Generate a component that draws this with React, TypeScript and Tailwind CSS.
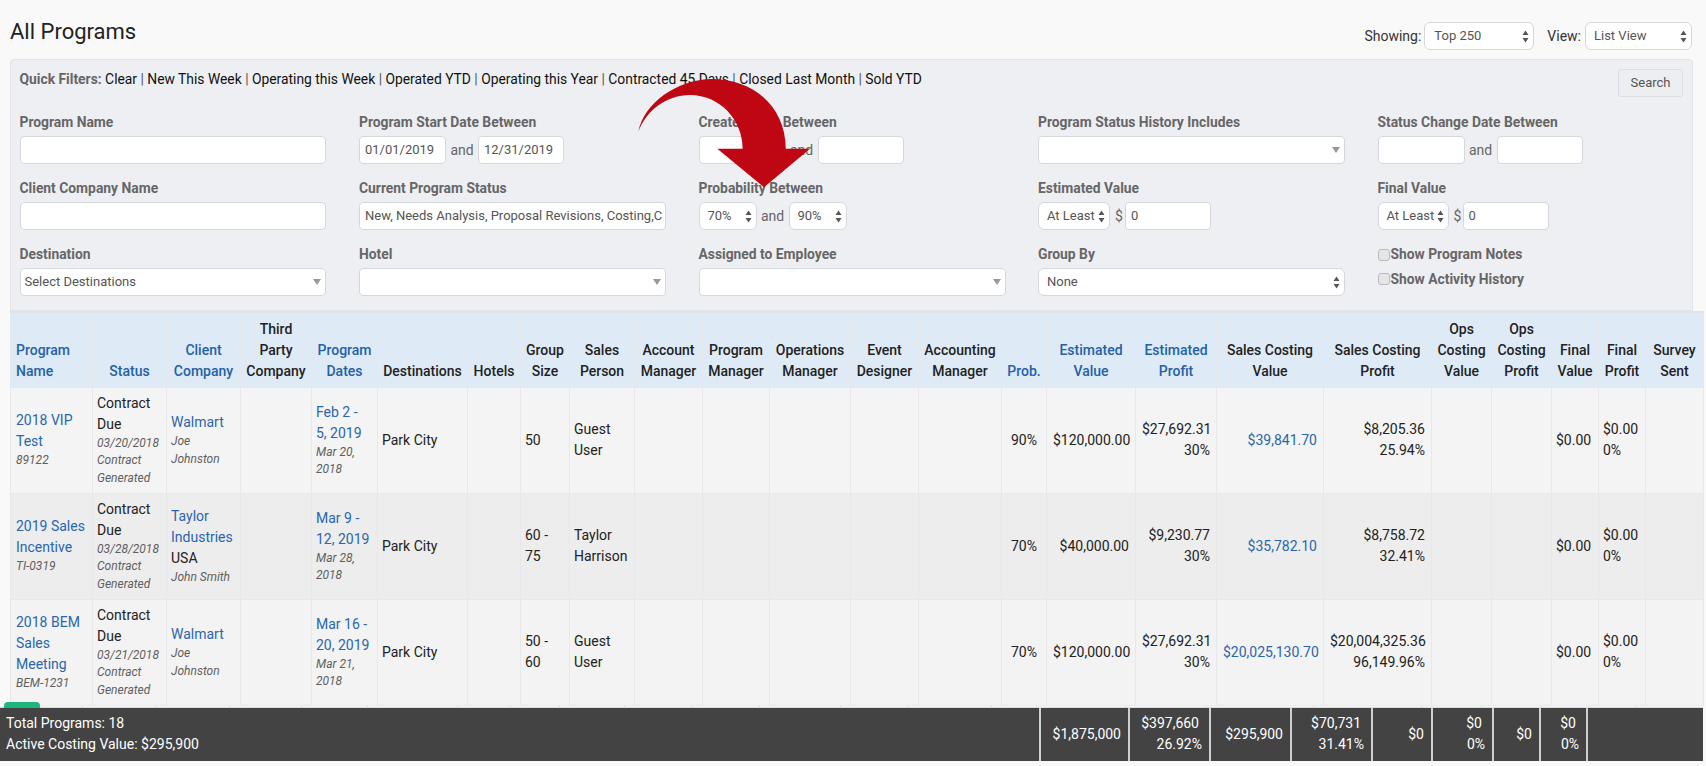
import type { ReactNode } from 'react';

const colWidths = [
  'w-[82px]', 'w-[74px]', 'w-[74px]', 'w-[71px]', 'w-[66px]', 'w-[90px]', 'w-[53px]', 'w-[49px]',
  'w-[65px]', 'w-[68px]', 'w-[67px]', 'w-[81px]', 'w-[68px]', 'w-[83px]', 'w-[45px]', 'w-[89px]',
  'w-[81px]', 'w-[107px]', 'w-[108px]', 'w-[60px]', 'w-[60px]', 'w-[47px]', 'w-[47px]', 'w-[58px]',
];

const headers = [
  { lines: ['Program', 'Name'], link: true },
  { lines: ['Status'], link: true },
  { lines: ['Client', 'Company'], link: true },
  { lines: ['Third', 'Party', 'Company'] },
  { lines: ['Program', 'Dates'], link: true },
  { lines: ['Destinations'] },
  { lines: ['Hotels'] },
  { lines: ['Group', 'Size'] },
  { lines: ['Sales', 'Person'] },
  { lines: ['Account', 'Manager'] },
  { lines: ['Program', 'Manager'] },
  { lines: ['Operations', 'Manager'] },
  { lines: ['Event', 'Designer'] },
  { lines: ['Accounting', 'Manager'] },
  { lines: ['Prob.'], link: true },
  { lines: ['Estimated', 'Value'], link: true },
  { lines: ['Estimated', 'Profit'], link: true },
  { lines: ['Sales Costing', 'Value'] },
  { lines: ['Sales Costing', 'Profit'] },
  { lines: ['Ops', 'Costing', 'Value'] },
  { lines: ['Ops', 'Costing', 'Profit'] },
  { lines: ['Final', 'Value'] },
  { lines: ['Final', 'Profit'] },
  { lines: ['Survey', 'Sent'] },
];

const rows = [
  {
    bg: 'bg-[#f4f4f4]',
    name: ['2018 VIP', 'Test'], code: '89122', date: '03/20/2018',
    client: ['Walmart'], clientExtra: '', contact: ['Joe', 'Johnston'],
    dates: ['Feb 2 -', '5, 2019'], created: ['Mar 20,', '2018'],
    group: ['50'], person: ['Guest', 'User'], prob: '90%', est: '$120,000.00',
    profit: ['$27,692.31', '30%'], costing: '$39,841.70', costProfit: ['$8,205.36', '25.94%'],
  },
  {
    bg: 'bg-[#ededed]',
    name: ['2019 Sales', 'Incentive'], code: 'TI-0319', date: '03/28/2018',
    client: ['Taylor', 'Industries'], clientExtra: 'USA', contact: ['John Smith'],
    dates: ['Mar 9 -', '12, 2019'], created: ['Mar 28,', '2018'],
    group: ['60 -', '75'], person: ['Taylor', 'Harrison'], prob: '70%', est: '$40,000.00',
    profit: ['$9,230.77', '30%'], costing: '$35,782.10', costProfit: ['$8,758.72', '32.41%'],
  },
  {
    bg: 'bg-[#f3f3f3]',
    name: ['2018 BEM', 'Sales', 'Meeting'], code: 'BEM-1231', date: '03/21/2018',
    client: ['Walmart'], clientExtra: '', contact: ['Joe', 'Johnston'],
    dates: ['Mar 16 -', '20, 2019'], created: ['Mar 21,', '2018'],
    group: ['50 -', '60'], person: ['Guest', 'User'], prob: '70%', est: '$120,000.00',
    profit: ['$27,692.31', '30%'], costing: '$20,025,130.70', costProfit: ['$20,004,325.36', '96,149.96%'],
  },
];

const stripWidths = [
  'w-[83px]', 'w-[74px]', 'w-[73px]', 'w-[72px]', 'w-[66px]', 'w-[90px]', 'w-[53px]', 'w-[49px]',
  'w-[65px]', 'w-[68px]', 'w-[67px]', 'w-[81px]', 'w-[68px]', 'w-[83px]', 'w-[45px]', 'w-[89px]',
  'w-[81px]', 'w-[107px]', 'w-[108px]', 'w-[60px]', 'w-[60px]', 'w-[47px]', 'w-[47px]',
];

function Lines({ items }: { items: string[] }) {
  return (
    <>
      {items.map((t) => (
        <div key={t}>{t}</div>
      ))}
    </>
  );
}

function Small({ items }: { items: string[] }) {
  return (
    <div className="text-[12px] leading-[17.5px] italic text-[#5f5f5f]">
      <Lines items={items} />
    </div>
  );
}

function Label({ children }: { children: ReactNode }) {
  return <div className="h-[24px] text-[13.85px] leading-[21px] font-bold text-[#666]">{children}</div>;
}

function Field({ value, className }: { value?: string; className: string }) {
  return (
    <div className={`h-[28px] bg-white border border-[#d4d7dd] rounded-[4px] px-[5px] text-[13px] leading-[26px] text-[#555] overflow-hidden whitespace-nowrap ${className}`}>
      {value}
    </div>
  );
}

function Updown() {
  return (
    <svg width="7" height="13" viewBox="0 0 7 13" className="shrink-0">
      <path d="M3.5 0.5 L6.5 5 H0.5 Z M3.5 12.5 L0.5 8 H6.5 Z" fill="#555" />
    </svg>
  );
}

function NativeSelect({ value, className }: { value: string; className: string }) {
  return (
    <div className={`h-[28px] bg-white border border-[#d4d7dd] rounded-[6px] pl-[8px] pr-[4px] flex items-center justify-between text-[13px] text-[#555] whitespace-nowrap ${className}`}>
      <span>{value}</span>
      <Updown />
    </div>
  );
}

function Chosen({ value, className = 'w-[307px]' }: { value?: string; className?: string }) {
  return (
    <div className={`h-[28px] bg-white border border-[#d4d7dd] rounded-[4px] pl-[4px] pr-[4px] flex items-center justify-between text-[13px] text-[#555] ${className}`}>
      <span>{value}</span>
      <svg width="8" height="6" viewBox="0 0 8 6" className="shrink-0">
        <path d="M0 0 H8 L4 6 Z" fill="#999" />
      </svg>
    </div>
  );
}

function And() {
  return <span className="w-[32px] text-center text-[14px] text-[#666]">and</span>;
}

function Check({ label }: { label: string }) {
  return (
    <div className="flex items-center h-[21px] text-[13.85px] font-bold text-[#666]">
      <span className="w-[12px] h-[12px] mr-[1px] rounded-[3px] border border-[#b9bbc0] bg-[#e6e6e6]" />
      {label}
    </div>
  );
}

function TotalCell({ lines, className }: { lines: string[]; className: string }) {
  return (
    <div className={`border-l-2 border-[#cfcfcf] pr-[7px] flex flex-col justify-center items-end leading-[21px] ${className}`}>
      {lines.map((t, i) => (
        <div key={t} className={lines.length > 1 && i === 0 ? 'mr-[3px]' : ''}>{t}</div>
      ))}
    </div>
  );
}

export default function App() {
  return (
    <div className="relative w-[1706px] h-[766px] overflow-hidden bg-[#f9f9f9] [font-family:Roboto,sans-serif] text-[14px] text-[#222]">
      {/* Title row */}
      <div className="h-[59px] pl-[10px] pr-[14px] flex items-start justify-between">
        <h1 className="mt-[16px] text-[22px] leading-[32px] font-normal text-[#222]">All Programs</h1>
        <div className="mt-[22px] flex items-center text-[14px] text-[#333]">
          <span className="mr-[3px]">Showing:</span>
          <NativeSelect value="Top 250" className="w-[110px] pl-[9px]" />
          <span className="ml-[13px] mr-[4px]">View:</span>
          <NativeSelect value="List View" className="w-[107px]" />
        </div>
      </div>

      {/* Filters */}
      <div className="ml-[10px] w-[1683px] h-[252px] bg-[#eeeff3] border border-[#e3e4e8] rounded-t-[4px] pl-[8.5px] pr-[9px]">
        <div className="h-[52px] flex items-start justify-between">
          <div className="mt-[9px] leading-[21px] text-[13.85px] text-[#111] whitespace-nowrap">
            <span className="font-bold text-[#666]">Quick Filters:</span> Clear <span className="text-[#555]">|</span> New This Week <span className="text-[#555]">|</span> Operating this Week <span className="text-[#555]">|</span> Operated YTD <span className="text-[#555]">|</span> Operating this Year <span className="text-[#555]">|</span> Contracted 45 Days <span className="text-[#555]">|</span> Closed Last Month <span className="text-[#555]">|</span> Sold YTD
          </div>
          <button className="mt-[9px] w-[65px] h-[28px] border border-[#dcdee3] rounded-[3px] bg-[#eceef1] text-[13px] text-[#555]">Search</button>
        </div>

        <div className="grid grid-cols-[339.5px_339.5px_339.5px_339.5px_300px] grid-rows-[66px_66px_66px]">
          <div>
            <Label>Program Name</Label>
            <Field className="w-[306px]" />
          </div>
          <div>
            <Label>Program Start Date Between</Label>
            <div className="flex items-center">
              <Field value="01/01/2019" className="w-[87px]" />
              <And />
              <Field value="12/31/2019" className="w-[86px]" />
            </div>
          </div>
          <div>
            <Label>Created Date Between</Label>
            <div className="flex items-center">
              <Field className="w-[87px]" />
              <And />
              <Field className="w-[86px]" />
            </div>
          </div>
          <div>
            <Label>Program Status History Includes</Label>
            <Chosen />
          </div>
          <div>
            <Label>Status Change Date Between</Label>
            <div className="flex items-center">
              <Field className="w-[87px]" />
              <And />
              <Field className="w-[86px]" />
            </div>
          </div>

          <div>
            <Label>Client Company Name</Label>
            <Field className="w-[306px]" />
          </div>
          <div>
            <Label>Current Program Status</Label>
            <Field value="New, Needs Analysis, Proposal Revisions, Costing,C" className="w-[307px]" />
          </div>
          <div>
            <Label>Probability Between</Label>
            <div className="flex items-center">
              <NativeSelect value="70%" className="w-[58px]" />
              <And />
              <NativeSelect value="90%" className="w-[58px]" />
            </div>
          </div>
          <div>
            <Label>Estimated Value</Label>
            <div className="flex items-center">
              <NativeSelect value="At Least" className="w-[72px]" />
              <span className="w-[15px] pl-[5px] text-[#666]">$</span>
              <Field value="0" className="w-[86px]" />
            </div>
          </div>
          <div>
            <Label>Final Value</Label>
            <div className="flex items-center">
              <NativeSelect value="At Least" className="w-[71px]" />
              <span className="w-[14px] pl-[5px] text-[#666]">$</span>
              <Field value="0" className="w-[86px]" />
            </div>
          </div>

          <div>
            <Label>Destination</Label>
            <Chosen value="Select Destinations" className="w-[306px]" />
          </div>
          <div>
            <Label>Hotel</Label>
            <Chosen />
          </div>
          <div>
            <Label>Assigned to Employee</Label>
            <Chosen />
          </div>
          <div>
            <Label>Group By</Label>
            <NativeSelect value="None" className="w-[307px]" />
          </div>
          <div className="flex flex-col gap-[3.5px]">
            <Check label="Show Program Notes" />
            <Check label="Show Activity History" />
          </div>
        </div>
      </div>

      {/* Programs table */}
      <table className="ml-[10px] w-[1693px] table-fixed border-collapse border-t-2 border-[#e2e3e6]">
        <colgroup>
          {colWidths.map((w, i) => (
            <col key={i} className={w} />
          ))}
        </colgroup>
        <thead>
          <tr className="h-[75px] bg-[#deebf7]">
            {headers.map((h, i) => (
              <th
                key={i}
                className={`border border-[#e6e8ec] px-0 pb-[5px] align-bottom text-center font-medium leading-[21px] whitespace-nowrap ${h.link ? 'text-[#2461a8]' : 'text-[#222]'} ${i === 0 ? 'text-left pl-[5px]' : ''}`}
              >
                <Lines items={h.lines} />
              </th>
            ))}
          </tr>
        </thead>
        <tbody className="leading-[21px]">
          {rows.map((r) => (
            <tr key={r.code} className={`h-[106px] ${r.bg}`}>
              <td className="border border-[#e6e8ec] px-[5px] align-middle text-[#2a66ad]">
                <Lines items={r.name} />
                <Small items={[r.code]} />
              </td>
              <td className="border border-[#e6e8ec] px-[4px] align-middle whitespace-nowrap">
                <div>Contract</div>
                <div>Due</div>
                <Small items={[r.date, 'Contract', 'Generated']} />
              </td>
              <td className="border border-[#e6e8ec] px-[4px] align-middle whitespace-nowrap">
                <div className="text-[#2a66ad]">
                  <Lines items={r.client} />
                </div>
                {r.clientExtra && <div>{r.clientExtra}</div>}
                <Small items={r.contact} />
              </td>
              <td className="border border-[#e6e8ec]" />
              <td className="border border-[#e6e8ec] px-[4px] align-middle whitespace-nowrap">
                <div className="text-[#2a66ad]">
                  <Lines items={r.dates} />
                </div>
                <Small items={r.created} />
              </td>
              <td className="border border-[#e6e8ec] px-[4px] align-middle">Park City</td>
              <td className="border border-[#e6e8ec]" />
              <td className="border border-[#e6e8ec] px-[4px] align-middle">
                <Lines items={r.group} />
              </td>
              <td className="border border-[#e6e8ec] px-[4px] align-middle">
                <Lines items={r.person} />
              </td>
              <td className="border border-[#e6e8ec]" />
              <td className="border border-[#e6e8ec]" />
              <td className="border border-[#e6e8ec]" />
              <td className="border border-[#e6e8ec]" />
              <td className="border border-[#e6e8ec]" />
              <td className="border border-[#e6e8ec] px-0 align-middle text-center">{r.prob}</td>
              <td className="border border-[#e6e8ec] px-[6px] align-middle text-right whitespace-nowrap">{r.est}</td>
              <td className="border border-[#e6e8ec] px-[6px] align-middle text-right whitespace-nowrap">
                <Lines items={r.profit} />
              </td>
              <td className="border border-[#e6e8ec] px-[6px] align-middle text-right whitespace-nowrap text-[#2a66ad]">{r.costing}</td>
              <td className="border border-[#e6e8ec] px-[6px] align-middle text-right whitespace-nowrap">
                <Lines items={r.costProfit} />
              </td>
              <td className="border border-[#e6e8ec]" />
              <td className="border border-[#e6e8ec]" />
              <td className="border border-[#e6e8ec] px-[4px] align-middle">$0.00</td>
              <td className="border border-[#e6e8ec] px-[4px] align-middle">
                <div>$0.00</div>
                <div>0%</div>
              </td>
              <td className="border border-[#e6e8ec]" />
            </tr>
          ))}
        </tbody>
      </table>

      {/* Sticky header sliver under the table */}
      <div className="h-[1px] flex">
        {stripWidths.map((w, i) => (
          <div key={i} className={`${w} border-r border-[#d8d8d8]`} />
        ))}
      </div>

      {/* Totals bar */}
      <div className="w-[1703px] h-[54px] flex bg-[#434343] text-white border-t border-[#d9d9d9]">
        <div className="w-[1039px] pl-[6px] flex flex-col justify-center leading-[21px]">
          <div>Total Programs: 18</div>
          <div>Active Costing Value: $295,900</div>
        </div>
        <TotalCell lines={['$1,875,000']} className="w-[89px]" />
        <TotalCell lines={['$397,660', '26.92%']} className="w-[81px]" />
        <TotalCell lines={['$295,900']} className="w-[81px]" />
        <TotalCell lines={['$70,731', '31.41%']} className="w-[81px]" />
        <TotalCell lines={['$0']} className="w-[60px]" />
        <TotalCell lines={['$0', '0%']} className="w-[61px]" />
        <TotalCell lines={['$0']} className="w-[47px]" />
        <TotalCell lines={['$0', '0%']} className="w-[47px]" />
        <div className="flex-1 border-l-2 border-[#cfcfcf]" />
      </div>

      {/* Green tab peeking above the totals bar */}
      <div className="absolute left-[4px] top-[702px] w-[36px] h-[6px] rounded-t-[4px] bg-[#1eb57d]" />

      {/* Red annotation arrow */}
      <svg className="absolute left-[620px] top-[70px]" width="260" height="160" viewBox="0 0 780 480">
        <path
          d="M55 185 C72 100 170 30 270 27 C400 25 497 110 497 236 L570 236 L432 352 L292 236 L368 236 C368 150 300 75 210 75 C140 75 80 120 55 185 Z"
          fill="#be0712"
        />
      </svg>
    </div>
  );
}
